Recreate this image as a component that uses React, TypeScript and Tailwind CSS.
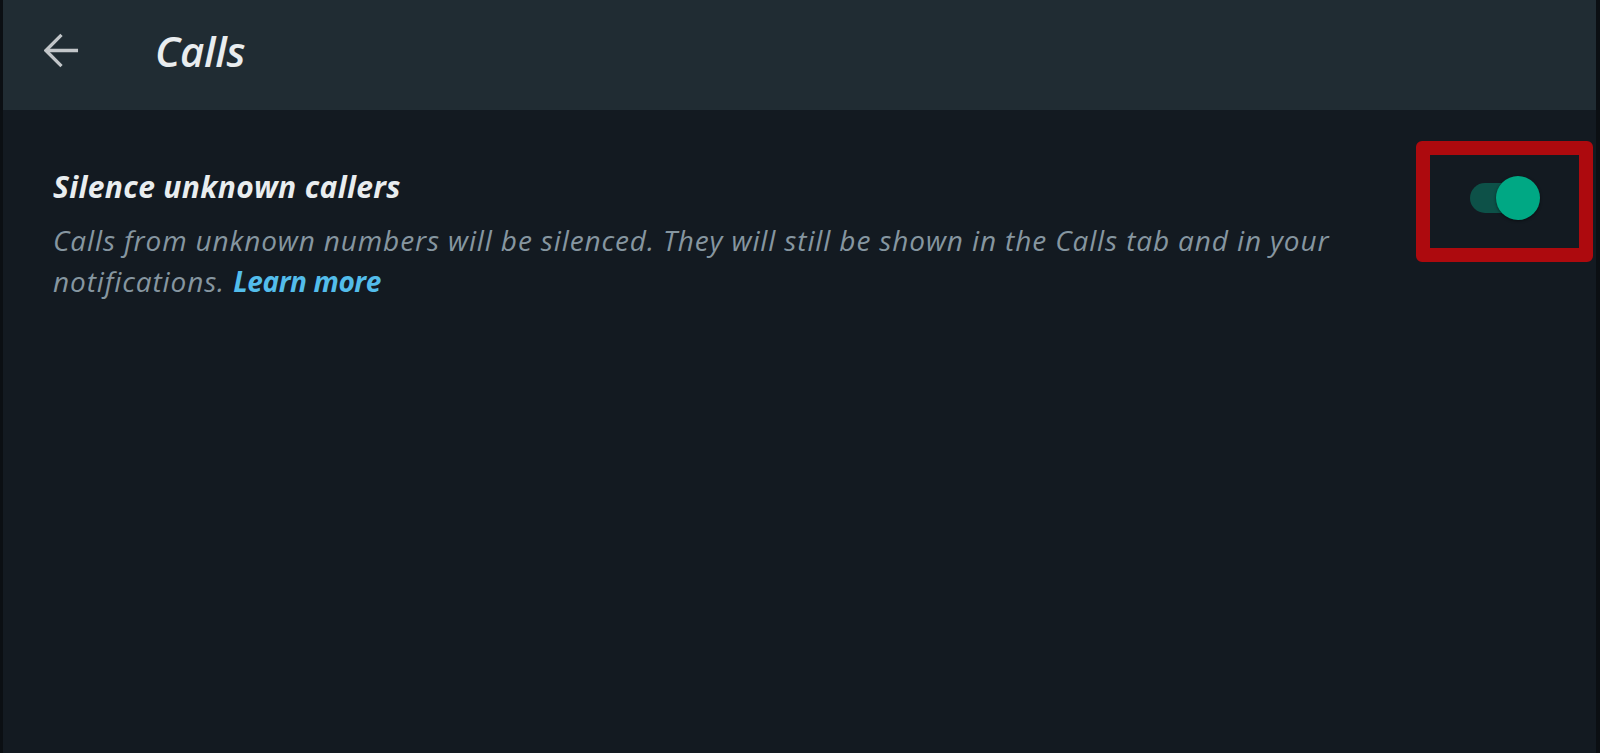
import React, { useState } from "react";

const font = { fontFamily: "'Open Sans', 'Noto Sans', sans-serif" };

const BackArrow = () => (
  <svg viewBox="0 0 36 36" className="h-[35px] w-[35px]" fill="none" stroke="#c2c6c9" strokeWidth="3.4" strokeLinecap="butt">
    <path d="M35 18H3" />
    <path d="M18 2 2 18l16 16" />
  </svg>
);

const Toggle = ({ on, onChange }: { on: boolean; onChange: (v: boolean) => void }) => (
  <button type="button" onClick={() => onChange(!on)} className="relative h-[44px] w-[70px]">
    <span className={`absolute left-0 top-[7px] h-[30px] w-[64px] rounded-full ${on ? "bg-[#0d5148]" : "bg-[#3b4a54]"}`} />
    <span
      className={`absolute top-0 h-[44px] w-[44px] rounded-full shadow-[0_1px_3px_rgba(0,0,0,0.5)] ${on ? "right-0 bg-[#00a884]" : "left-0 bg-[#aebac1]"}`}
    />
  </button>
);

export default function App() {
  const [silence, setSilence] = useState(true);

  return (
    <div style={font} className="flex h-[753px] w-full flex-col border-l-[3px] border-r-[4px] border-[#0b0f13] bg-[#131a21]">
      <header className="flex h-[110px] shrink-0 items-center bg-[#202c33] pb-[10px]">
        <div className="ml-[41px] flex items-center">
          <BackArrow />
        </div>
        <h1 className="ml-[76px] text-[42px] font-semibold italic tracking-[-0.3px] text-[#e9edef]">Calls</h1>
      </header>
      <main className="flex items-start justify-between pl-[50px] pr-[3px] pt-[31px]">
        <div className="w-[1300px] pt-[28px]">
          <p className="text-[30px] font-bold italic leading-[36px] tracking-[0.35px] text-[#e9edef]">Silence unknown callers</p>
          <p className="mt-[15px] text-[28px] italic leading-[41px] tracking-[0.87px] text-[#8696a0]">
            Calls from unknown numbers will be silenced. They will still be shown in the Calls tab and in your
            notifications. <span className="font-bold tracking-[-0.4px] text-[#53bdeb]">Learn more</span>
          </p>
        </div>
        <div className="flex h-[121px] w-[177px] items-center justify-center rounded-[6px] border-[14px] border-[#ad0a0e] pb-[7px]">
          <Toggle on={silence} onChange={setSilence} />
        </div>
      </main>
    </div>
  );
}
